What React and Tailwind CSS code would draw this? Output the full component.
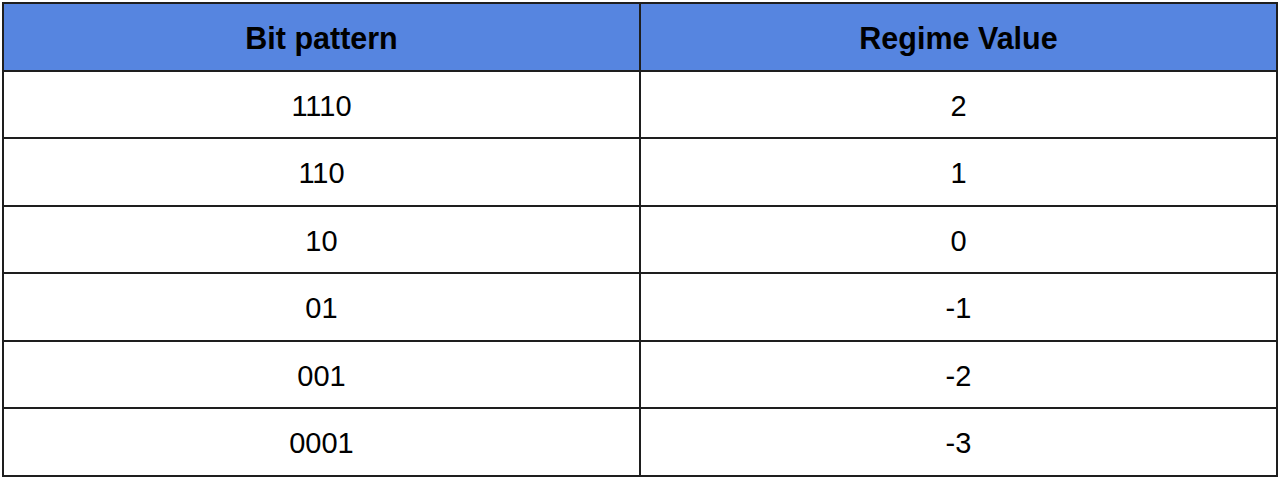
import React from "react";

const rows = [
  ["1110", "2"],
  ["110", "1"],
  ["10", "0"],
  ["01", "-1"],
  ["001", "-2"],
  ["0001", "-3"],
];

function App() {
  return (
    <div className="w-[1280px] h-[480px] bg-white p-[2px] font-['Liberation_Sans',Arial,sans-serif] text-black">
      <table className="w-[1276px] border-collapse table-fixed">
        <thead>
          <tr className="h-[68px] bg-[#5685e0]">
            <th className="border-2 border-[#1e1e1e] pt-[3px] text-[30.5px] font-bold">Bit pattern</th>
            <th className="border-2 border-[#1e1e1e] pt-[3px] text-[30.5px] font-bold">Regime Value</th>
          </tr>
        </thead>
        <tbody>
          {rows.map(([bits, value], i) => (
            <tr key={bits} className={i % 2 === 0 ? "h-[67px]" : "h-[68px]"}>
              <td className="border-2 border-[#1e1e1e] pt-[4px] text-center text-[29px]">{bits}</td>
              <td className="border-2 border-[#1e1e1e] pt-[4px] text-center text-[29px]">{value}</td>
            </tr>
          ))}
        </tbody>
      </table>
    </div>
  );
}

export default App;
